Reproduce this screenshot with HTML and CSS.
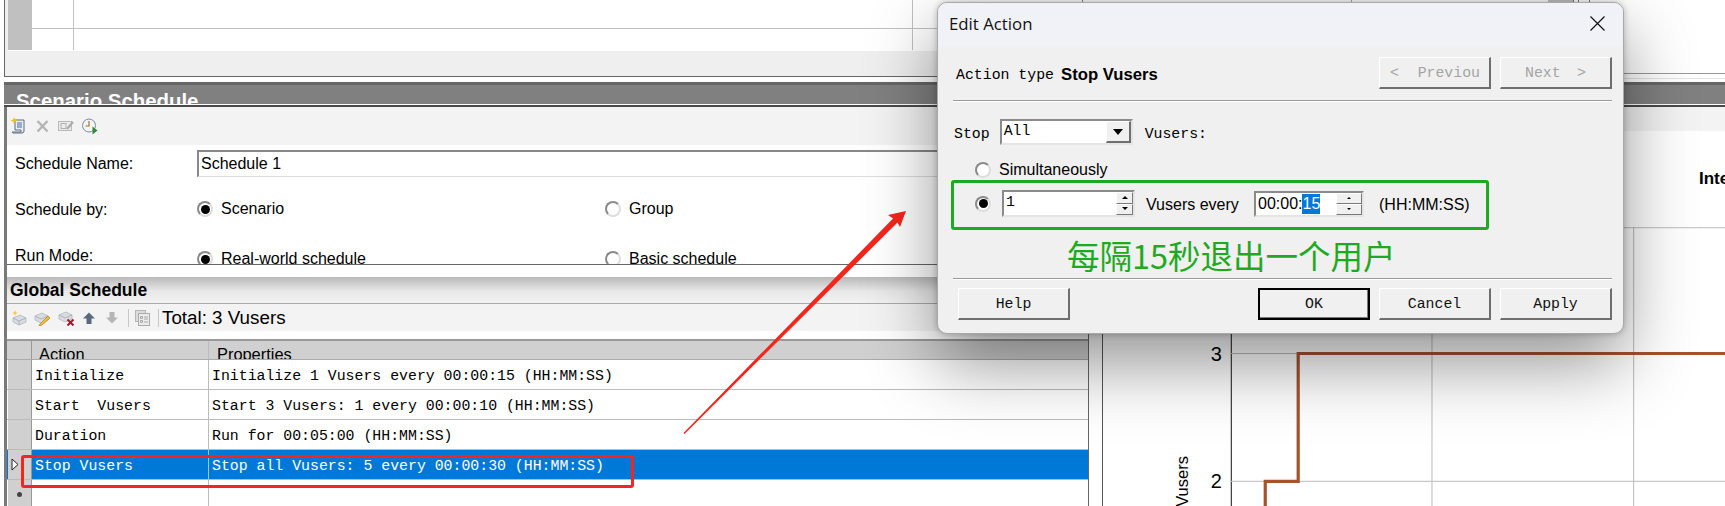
FILE: index.html
```html
<!DOCTYPE html>
<html lang="en">
<head>
<meta charset="utf-8">
<title>Scenario Schedule</title>
<link rel="stylesheet" href="styles.css">
</head>
<body>
<div class="page">
  <div class="top-row">
    <div class="top-panel">
      <div class="mini-grid">
        <div class="mini-row first"><span class="mini-head"></span><span class="mini-cell narrow"></span><span class="mini-cell wide"></span><span class="mini-cell end"></span></div>
        <div class="mini-row"><span class="mini-head"></span><span class="mini-cell narrow"></span><span class="mini-cell wide"></span><span class="mini-cell end"></span></div>
      </div>
    </div>
    <div class="top-right"></div>
  </div>

  <div class="schedule-bar"><span class="schedule-title">Scenario Schedule</span></div>

  <div class="main-row">
    <div class="left-col">
      <div class="form-panel">
        <div class="form-toolbar">
          <svg class="ti" width="16" height="18" viewBox="0 0 16 18"><path d="M5 3h9v11a2 2 0 0 1-2 2H3a2 2 0 0 1-1-1h9v-2H5z" fill="#e9eef4" stroke="#5a6a80"/><path d="M7 6h5M7 8h5M7 10h5" stroke="#4a6a9a"/><path d="M4 0l1 2.500 2.500 1-2.500 1-1 2.500-1-2.500-2.500-1 2.500-1z" fill="#f0c020"/></svg>
          <svg class="ti gap-a" width="13" height="14" viewBox="0 0 13 14"><path d="M1.500 2l10 10.500M11.500 2l-10 10.500" stroke="#b4b4b4" stroke-width="2.400"/></svg>
          <svg class="ti gap-b" width="16" height="12" viewBox="0 0 16 12"><rect x=".5" y="1.500" width="13" height="9" fill="#ececec" stroke="#b8b8b8"/><rect x="3" y="3.500" width="5" height="5" fill="none" stroke="#b0b0b0"/><path d="M9 9l6-7" stroke="#a8a8a8" stroke-width="2"/></svg>
          <svg class="ti gap-c" width="16" height="17" viewBox="0 0 16 17"><circle cx="7" cy="7.500" r="6.500" fill="#f2f4f8" stroke="#7a8aa0"/><path d="M7 3v5H3.500" fill="none" stroke="#a07820" stroke-width="1.200"/><path d="M10.500 8.500l5 4-5 4z" fill="#2f8a3a"/></svg>
        </div>
        <div class="form-body">
          <div class="form-line name-line"><span class="form-label">Schedule Name:</span><div class="name-input">Schedule 1</div></div>
          <div class="form-line by-line"><span class="form-label">Schedule by:</span><span class="radio-opt"><i class="radio on"></i>Scenario</span><span class="radio-opt"><i class="radio"></i>Group</span></div>
          <div class="form-line mode-line"><span class="form-label mode-label">Run Mode:</span><span class="radio-opt"><i class="radio on"></i>Real-world schedule</span><span class="radio-opt"><i class="radio"></i>Basic schedule</span></div>
        </div>
      </div>

      <div class="global-head">Global Schedule</div>
      <div class="global-toolbar">
        <svg class="gi" width="16" height="16" viewBox="0 0 16 16"><path d="M2 8l7-3 6 3v4l-7 3-6-3z" fill="#d9dde2" stroke="#a9afb8" stroke-width=".7"/><path d="M2 8l6 3 7-3M8 11v4" fill="none" stroke="#9aa0aa" stroke-width=".7"/><path d="M4 0l.8 2.200L7 3l-2.200.8L4 6l-.8-2.200L1 3l2.200-.8z" fill="#f0c94a"/></svg>
        <svg class="gi gap-1" width="17" height="17" viewBox="0 0 17 17"><path d="M1 7l7-3 6 3v4l-7 3-6-3z" fill="#d9dde2" stroke="#a9afb8" stroke-width=".7"/><path d="M1 7l6 3 7-3" fill="none" stroke="#9aa0aa" stroke-width=".7"/><path d="M6 15l8-8 2 2-8 7-3 1z" fill="#f0c030" stroke="#b06a20" stroke-width=".6"/></svg>
        <svg class="gi gap-1" width="17" height="17" viewBox="0 0 17 17"><path d="M1 6l7-3 6 3v4l-7 3-6-3z" fill="#d9dde2" stroke="#a9afb8" stroke-width=".7"/><path d="M1 6l6 3 7-3" fill="none" stroke="#9aa0aa" stroke-width=".7"/><path d="M9.500 10.500l6 6M15.500 10.500l-6 6" stroke="#9c1a2a" stroke-width="2"/></svg>
        <svg class="gi gap-2" width="12" height="12" viewBox="0 0 12 12"><path d="M6 .5L12 6.500H8.500V12h-5V6.500H0z" fill="#5a6a7e"/></svg>
        <svg class="gi gap-3" width="12" height="12" viewBox="0 0 12 12"><path d="M6 11.500L12 5.500H8.500V0h-5v5.500H0z" fill="#b5b5b5"/></svg>
        <span class="tb-sep"></span>
        <svg class="gi gap-4" width="15" height="16" viewBox="0 0 15 16"><rect x=".5" y=".5" width="10" height="11" fill="#dcdcdc" stroke="#b5b5b5"/><rect x="3.500" y="3.500" width="11" height="12" fill="#ececec" stroke="#aaa"/><path d="M5.500 6.500h2v2h-2zM5.500 10.500h2v2h-2zM9 7h4M9 9h4M9 12h4" stroke="#a8a8a8" fill="none"/></svg>
        <span class="tb-sep sep-b"></span>
        <span class="total">Total: 3 Vusers</span>
      </div>
      <div class="action-table">
        <div class="t-row t-header"><span class="c-head"></span><span class="c-action">Action</span><span class="c-props">Properties</span></div>
        <div class="t-row"><span class="c-head"></span><span class="c-action">Initialize</span><span class="c-props">Initialize 1 Vusers every 00:00:15 (HH:MM:SS)</span></div>
        <div class="t-row"><span class="c-head"></span><span class="c-action">Start  Vusers</span><span class="c-props">Start 3 Vusers: 1 every 00:00:10 (HH:MM:SS)</span></div>
        <div class="t-row"><span class="c-head"></span><span class="c-action">Duration</span><span class="c-props">Run for 00:05:00 (HH:MM:SS)</span></div>
        <div class="t-row selected"><span class="c-head"><svg width="8" height="13" viewBox="0 0 8 13"><path d="M1 1l6 5.500L1 12z" fill="#fff" stroke="#222"/></svg></span><span class="c-action">Stop Vusers</span><span class="c-props">Stop all Vusers: 5 every 00:00:30 (HH:MM:SS)</span></div>
        <div class="t-row new-row"><span class="c-head"><i class="star"></i></span><span class="c-action"></span><span class="c-props"></span></div>
      </div>
    </div>

    <div class="right-col">
      <div class="right-toolbar"></div>
      <div class="chart-title-area"><span class="chart-title">Interactive Schedule Graph</span></div>
      <svg class="chart" width="623" height="280" viewBox="0 0 623 280">
        <path d="M0 .5H623" stroke="#bbb"/>
        <path d="M128.500 0V280" stroke="#111"/>
        <path d="M329.500 0V280M531.500 0V280" stroke="#bbb"/>
        <path d="M128 126.500H623M128 254.500H623" stroke="#bbb"/>
        <path d="M162.500 280V254.500H195.500V126.500H623" fill="none" stroke="#a3542f" stroke-width="3.200"/>
        <text class="chart-num" x="119" y="134" text-anchor="end">3</text>
        <text class="chart-num" x="119" y="261" text-anchor="end">2</text>
        <text class="chart-axis" transform="translate(85 280) rotate(-90)">Vusers</text>
      </svg>
    </div>
  </div>

  <svg class="annotation" width="1725" height="506" viewBox="0 0 1725 506">
    <path d="M683.500 433L893 218.500L888 215L906 211L900 227L897.500 222.500L684.500 434z" fill="#f4261c"/>
  </svg>
  <div class="red-box"></div>

  <section class="dialog">
    <header class="dlg-title"><span>Edit Action</span>
      <svg width="15" height="15" viewBox="0 0 15 15"><path d="M.5.5l14 14M14.500.5l-14 14" stroke="#111" stroke-width="1.200"/></svg>
    </header>
    <div class="dlg-body">
      <div class="dlg-type">
        <span class="mono">Action type</span><b>Stop Vusers</b>
        <div class="dlg-nav"><button class="btn disabled"><span>&lt;</span><span>Previou</span></button><button class="btn disabled"><span>Next</span><span>&gt;</span></button></div>
      </div>
      <hr class="dlg-sep">
      <div class="stop-line">
        <span class="mono">Stop</span>
        <div class="combo"><span class="mono combo-text">All</span><span class="combo-btn"><i></i></span></div>
        <span class="mono">Vusers:</span>
      </div>
      <div class="simul"><i class="radio"></i>Simultaneously</div>
      <div class="every-box">
        <i class="radio on"></i>
        <div class="num-input"><span class="mono">1</span><span class="spin"><i class="up"></i><i class="down"></i></span></div>
        <span class="every-text">Vusers every</span>
        <div class="time-input"><span>00:00:<mark>15</mark></span><span class="spin small"><i class="up"></i><i class="down"></i></span></div>
        <span class="fmt">(HH:MM:SS)</span>
      </div>
      <div class="note">每隔15秒退出一个用户</div>
      <hr class="dlg-sep bottom">
      <div class="dlg-actions">
        <button class="btn">Help</button>
        <div class="dlg-right"><button class="btn default">OK</button><button class="btn">Cancel</button><button class="btn">Apply</button></div>
      </div>
    </div>
  </section>
</div>
</body>
</html>
```
FILE: styles.css
```css
* { box-sizing: border-box; }
html, body { margin: 0; padding: 0; background: #fff; }
body { font-family: "Liberation Sans", Arial, sans-serif; color: #000; }
.page { position: relative; width: 1725px; height: 506px; overflow: hidden; background: #fff; }

/* top strip */
.top-row { display: flex; height: 77px; margin-bottom: 5px; }
.top-panel { width: 1079px; margin-left: 4px; background: #efefef; border-left: 1px solid #666; border-right: 1px solid #888; border-bottom: 1px solid #666; padding-left: 3px; }
.mini-grid { background: #fff; height: 51px; }
.mini-row { display: flex; height: 29px; border-bottom: 1px solid #c0c0c0; }
.mini-row + .mini-row { height: 21px; border-bottom: 0; }
.mini-head { width: 24px; background: #c0c0c0; }
.mini-cell.narrow { width: 42px; border-right: 1px solid #c0c0c0; }
.mini-cell.wide { width: 839px; border-right: 1px solid #c0c0c0; }
.top-right { flex: 1; height: 74px; border-bottom: 1px solid #999; box-shadow: 0 4px 0 #fff, 0 5px 0 #e4e4e4;
  background-repeat: no-repeat;
  background-image: linear-gradient(#aaa, #aaa), linear-gradient(#c4c4c4, #c4c4c4), linear-gradient(#777, #777), linear-gradient(#777, #777), linear-gradient(#777, #777);
  background-size: 1px 3px, 25px 3px, 1px 3px, 1px 3px, 1px 3px;
  background-position: 268px 0, 465px 0, 490px 0, 495px 0, 506px 0; }

.schedule-bar { height: 23px; background: #808080; border-top: 3px solid #666; overflow: hidden; margin-left: 4px; border-bottom: 1px solid #fff; padding-left: 12px; }
.schedule-title { display: block; color: #fff; font-size: 20.400px; font-weight: bold; line-height: 32px; }

/* main */
.main-row { display: flex; height: 401px; border-top: 2px solid #4a4a4a; margin-left: 4px; }
.left-col { width: 1084px; border-left: 3px solid #7a7a7a; background: #fff; flex: none; }
.right-col { flex: 1; border-left: 1px solid #666; padding-left: 13px; position: relative; }

.form-panel { height: 158px; border-bottom: 1px solid #666; overflow: hidden; }
.form-toolbar { height: 38px; background: #f3f3f3; display: flex; align-items: center; padding: 0 0 0 3px; }
.ti { flex: none; }
.gap-a { margin-left: 10px; }
.gap-b { margin-left: 9px; }
.gap-c { margin-left: 8px; }
.form-body { font-size: 16px; padding-left: 8px; }
.form-line { display: flex; align-items: center; }
.form-label { width: 182px; flex: none; padding-top: 2px; }
.name-line { height: 26px; margin-top: 5px; }
.name-input { flex: 1; height: 27px; border: 2px solid #888; border-right: 0; border-bottom: 1px solid #ddd; background: #fff; padding-left: 2px; line-height: 24px; }
.by-line { margin-top: 23px; height: 20px; }
.by-line .form-label { padding-top: 1px; }
.mode-line { margin-top: 28px; height: 20px; align-items: flex-start; }
.mode-line .form-label { padding-top: 0; }
.radio-opt { display: flex; align-items: center; width: 408px; }
.mode-line .radio-opt { margin-top: 3px; }
.radio { display: inline-block; flex: none; width: 16px; height: 16px; border-radius: 50%; background: #fff; border: 2px solid #8a8a8a; border-right-color: #ddd; border-bottom-color: #ddd; position: relative; margin-right: 8px; }
.radio.on::after { content: ""; position: absolute; left: 1.500px; top: 1.500px; width: 9px; height: 9px; background: #000; border-radius: 50%; }

.global-head { margin-top: 12px; height: 27px; background: linear-gradient(#b9b9b9, #e8e8e8 55%, #f2f2f2); border-bottom: 1px solid #aaa; font-size: 17.500px; font-weight: bold; line-height: 27px; padding-left: 3px; }
.global-toolbar { height: 27px; background: #f3f3f3; display: flex; align-items: center; padding-left: 4px; }
.gi { flex: none; }
.gap-1 { margin-left: 7px; }
.gap-2 { margin-left: 8px; }
.gap-3 { margin-left: 11px; }
.tb-sep { width: 1px; height: 18px; background: #c8c8c8; margin-left: 10px; flex: none; }
.gap-4 { margin-left: 6px; }
.sep-b { margin-left: 8px; }
.total { font-size: 18.800px; margin-left: 3px; }

.action-table { margin-top: 8px; border-top: 2px solid #999; font-family: "Liberation Mono", monospace; font-size: 14.850px; }
.t-row { display: flex; height: 30px; border-bottom: 1px solid #bbb; }
.c-head { width: 24px; margin-left: 1px; background: #d0d0d0; border-right: 1px solid #999; flex: none; display: flex; align-items: center; padding-left: 3px; }
.c-action { width: 177px; flex: none; border-right: 1px solid #bbb; white-space: pre; padding-left: 3px; line-height: 33px; }
.c-props { flex: 1; white-space: pre; padding-left: 3px; line-height: 33px; }
.t-header { height: 19px; background: #d0d0d0; border-bottom: 1px solid #aaa; font-family: "Liberation Sans", sans-serif; font-size: 16.400px; overflow: hidden; }
.t-header .c-action { padding-left: 7px; line-height: 27px; height: 18px; overflow: hidden; }
.t-header .c-props { padding-left: 8px; line-height: 27px; height: 18px; overflow: hidden; }
.selected { background: #0078d7; color: #fff; }
.selected .c-action { border-right-color: #9cc4e8; }
.new-row { border-bottom: 0; height: 27px; }
.star { width: 5px; height: 5px; border-radius: 50%; background: #444; margin-left: 6px; margin-top: 2px; display: block; }

.right-toolbar { height: 24px; margin-left: -13px; background: #f3f3f3; }
.chart-title-area { height: 96px; margin-left: -13px; position: relative; overflow: hidden; padding-left: 610px; padding-top: 38px; white-space: nowrap; }
.chart-title { font-size: 17px; font-weight: bold; }
.chart { display: block; margin-top: 0; border-left: 1px solid #555; }
.chart-num { font-family: "Liberation Sans", sans-serif; font-size: 20px; fill: #000; }
.chart-axis { font-family: "Liberation Sans", sans-serif; font-size: 16.500px; fill: #000; }

/* overlays */
.annotation { position: absolute; left: 0; top: 0; pointer-events: none; }
.red-box { position: absolute; left: 21px; top: 455px; width: 613px; height: 33px; border: 3px solid #f4261c; border-radius: 3px; }

.dialog { position: absolute; left: 937px; top: 2px; width: 687px; height: 332px; background: #f0f0f0; border: 1.500px solid #a8a8a8; border-radius: 10px; box-shadow: 0 30px 70px rgba(0,0,0,.42), 0 0 6px rgba(0,0,0,.25); overflow: hidden; }
.dlg-title { height: 43px; background: #f0f2f8; display: flex; align-items: center; justify-content: space-between; padding: 0 18px 3px 11px; font-family: "Open Sans", sans-serif; font-size: 16.800px; color: #111; }
.dlg-body { position: relative; padding: 0 11px 0 15px; }
.mono { font-family: "Liberation Mono", monospace; font-size: 14.850px; white-space: pre; }
.dlg-type { height: 54px; display: flex; align-items: center; padding: 4px 0 0 3px; }
.dlg-type b { font-size: 16.700px; margin-left: 7px; }
.dlg-nav { margin-left: auto; display: flex; gap: 9px; margin-top: -4px; }
.btn { width: 112px; height: 32px; background: #f0f0f0; border: 2px solid; border-color: #fff #6e6e6e #6e6e6e #fff; border-width: 1px 2px 2px 1px; font-family: "Liberation Mono", monospace; font-size: 14.850px; color: #111; padding: 0; }
.btn.disabled { display: flex; align-items: center; justify-content: space-between; padding: 0 9px 0 10px; color: #a4a4a4; }
.btn.disabled + .btn.disabled { padding: 0 24px 0 24px; }
.dlg-sep { border: 0; height: 2px; border-top: 1px solid #9a9a9a; border-bottom: 1px solid #fff; margin: 0; }
.stop-line { display: flex; align-items: center; height: 26px; margin-top: 17px; padding-left: 1px; }
.stop-line > .mono { margin-top: 4px; }
.combo { width: 133px; height: 26px; margin: 0 12px 0 10px; background: #fff; border: 2px solid #8a8a8a; border-right-color: #e4e4e4; border-bottom-color: #e4e4e4; display: flex; justify-content: space-between; }
.combo-text { padding-left: 2px; line-height: 20px; }
.combo-btn { width: 25px; height: 22px; background: #f0f0f0; border: 1px solid; border-color: #fff #6e6e6e #6e6e6e #fff; border-width: 1px 2px 2px 1px; display: flex; align-items: center; justify-content: center; }
.combo-btn i { width: 0; height: 0; border: 5.500px solid transparent; border-top: 6px solid #000; border-bottom: 0; }
.simul { display: flex; align-items: center; font-size: 16px; height: 20px; margin: 15px 0 0 22px; }
.simul .radio { margin-right: 8px; }
.every-box { display: flex; align-items: center; width: 538px; height: 50px; margin: 0 0 0 -2px; border: 3px solid #1eaa20; border-radius: 3px; padding-left: 21px; font-size: 16px; }
.every-box .radio { margin-right: 11px; margin-top: -3px; }
.num-input { width: 133px; height: 27px; margin-top: -3px; background: #fff; border: 2px solid #8a8a8a; border-right-color: #e4e4e4; border-bottom-color: #e4e4e4; display: flex; justify-content: space-between; padding-left: 2px; line-height: 20px; }
.spin { width: 17px; display: flex; flex-direction: column; }
.spin.small { width: 26px; }
.spin i { flex: 1; background: #f0f0f0; border: 1px solid #8a8a8a; border-color: #fff #7a7a7a #7a7a7a #fff; position: relative; }
.spin i::after { content: ""; position: absolute; left: 50%; top: 50%; margin: -2px 0 0 -3px; border: 3px solid transparent; }
.spin i.up::after { border-bottom: 3px solid #000; border-top: 0; }
.spin i.down::after { border-top: 3px solid #000; border-bottom: 0; }
.spin.small i::after { margin: -1px 0 0 -2px; border-width: 2px; }
.spin.small i.up::after { border-top: 0; }
.spin.small i.down::after { border-bottom: 0; }
.every-text { margin-left: 11px; width: 108px; flex: none; }
.time-input { width: 110px; height: 26px; margin-top: -3px; background: #fff; border: 2px solid #8a8a8a; border-right-color: #e4e4e4; border-bottom-color: #e4e4e4; display: flex; justify-content: space-between; padding-left: 2px; line-height: 21px; }
.time-input mark { background: #0078d7; color: #fff; display: inline-block; line-height: 20px; }
.fmt { margin-left: 15px; margin-top: -1px; }
.note { color: #1eaa20; font-family: "Noto Sans CJK SC", sans-serif; font-size: 32.500px; line-height: 50px; height: 48px; padding-left: 114px; white-space: nowrap; }
.dlg-sep.bottom { position: relative; }
.dlg-actions { display: flex; justify-content: space-between; padding-left: 5px; margin-top: 8px; }
.dlg-right { display: flex; gap: 9px; }
.btn.default { border: 2px solid #000; box-shadow: inset -1px -1px 0 #777; }
```
